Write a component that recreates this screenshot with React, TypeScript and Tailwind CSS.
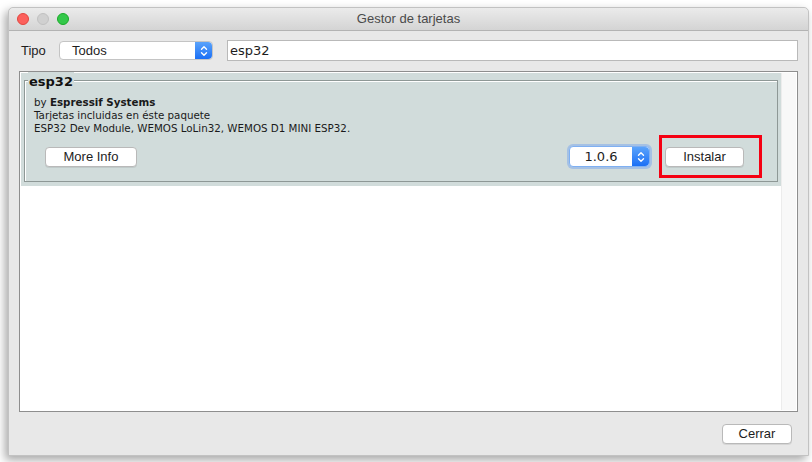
import React from 'react';

const ui = { fontFamily: '"DejaVu Sans", "Noto Sans", sans-serif' };
const sys = { fontFamily: '"Liberation Sans", Arial, sans-serif' };

function Stepper() {
  return (
    <span className="flex h-full w-[17px] items-center justify-center rounded-r-[4px] bg-gradient-to-b from-[#5aa3fb] to-[#1a6ff5]">
      <svg width="8" height="12" viewBox="0 0 8 12" fill="none" stroke="white" strokeWidth="1.4" strokeLinecap="round" strokeLinejoin="round">
        <path d="M1.5 4.3 L4 1.8 L6.5 4.3" />
        <path d="M1.5 7.7 L4 10.2 L6.5 7.7" />
      </svg>
    </span>
  );
}

function MacButton({ label, className = '' }: { label: string; className?: string }) {
  return (
    <button
      className={`flex h-[20px] items-center justify-center rounded-[4px] border border-[#b9b9b9] bg-white text-[13px] text-[#1d1d1d] shadow-[0_1px_0_rgba(0,0,0,0.08)] ${className}`}
      style={sys}
    >
      {label}
    </button>
  );
}

export default function App() {
  return (
    <div className="h-[462px] w-[812px] overflow-hidden bg-white">
      <div className="ml-[8px] mt-[7px] flex h-[449px] w-[801px] flex-col rounded-t-[5px] border border-[#c2c2c2] bg-[#e8e8e8] shadow-[-3px_4px_10px_rgba(0,0,0,0.35)]">
        {/* title bar */}
        <div className="relative flex h-[23px] shrink-0 items-center gap-[8px] rounded-t-[5px] border-b border-[#b3b3b3] bg-gradient-to-b from-[#ebebeb] to-[#d4d4d4] pl-[8px]">
          <span className="h-[12px] w-[12px] rounded-full border border-[#e2463f] bg-[#fc605c]" />
          <span className="h-[12px] w-[12px] rounded-full border border-[#c1c1c1] bg-[#d0d0d0]" />
          <span className="h-[12px] w-[12px] rounded-full border border-[#1aab29] bg-[#34c84a]" />
          <span className="absolute inset-x-0 text-center text-[13px] text-[#4a4a4a]" style={sys}>
            Gestor de tarjetas
          </span>
        </div>

        {/* filter row */}
        <div className="flex items-center pl-[12px] pr-[10px] pt-[9px]">
          <span className="w-[38px] text-[13px] text-[#1d1d1d]" style={sys}>
            Tipo
          </span>
          <div className="flex h-[19px] w-[154px] items-center rounded-[4px] border border-[#c4c4c4] bg-white">
            <span className="flex-1 pl-[12px] text-[13px] text-[#1d1d1d]" style={sys}>
              Todos
            </span>
            <Stepper />
          </div>
          <div className="ml-[14px] flex h-[21px] flex-1 items-center border border-[#b9b9b9] bg-white pl-[2px] text-[13px] text-[#1d1d1d]" style={ui}>
            esp32
          </div>
        </div>

        {/* list */}
        <div className="ml-[10px] mt-[10px] flex h-[341px] w-[779px] border border-[#8e8e8e] bg-white p-[1px]">
          <div className="flex flex-1 flex-col">
            <div className="h-[113px] bg-[#d1dcdb] px-[3px] pt-[7px]">
              <div className="relative h-[102px] border border-[#8e9896] shadow-[inset_1px_1px_0_#ffffff]">
                <span className="absolute -top-[9px] left-[3px] bg-[#d1dcdb] px-[1px] text-[13px] font-bold text-[#111]" style={ui}>
                  esp32
                </span>
                <div className="flex flex-col pl-[9px] pt-[15px] text-[10.3px] leading-[13px] text-[#1a1a1a]" style={ui}>
                  <span>
                    by <b>Espressif Systems</b>
                  </span>
                  <span>Tarjetas incluidas en éste paquete</span>
                  <span>ESP32 Dev Module, WEMOS LoLin32, WEMOS D1 MINI ESP32.</span>
                </div>
                <div className="flex items-center pl-[20px] pr-[15px]">
                  <MacButton label="More Info" className="w-[92px]" />
                  <div className="ml-auto flex h-[21px] w-[81px] items-center rounded-[4px] border border-[#7fb0f2] bg-white shadow-[0_0_0_2px_rgba(110,160,240,0.45)]">
                    <span className="flex-1 text-center text-[13px] text-[#1d1d1d]" style={ui}>
                      1.0.6
                    </span>
                    <Stepper />
                  </div>
                  <div className="ml-[9px] flex h-[43px] w-[103px] items-center border-[3px] border-[#f50012] pl-[3px]">
                    <MacButton label="Instalar" className="w-[79px]" />
                  </div>
                </div>
              </div>
            </div>
          </div>
          <div className="w-[15px] border-l border-[#ececec] bg-[#f8f8f8]" />
        </div>

        {/* footer */}
        <div className="flex justify-end pr-[16px] pt-[12px]">
          <MacButton label="Cerrar" className="w-[70px]" />
        </div>
      </div>
    </div>
  );
}
